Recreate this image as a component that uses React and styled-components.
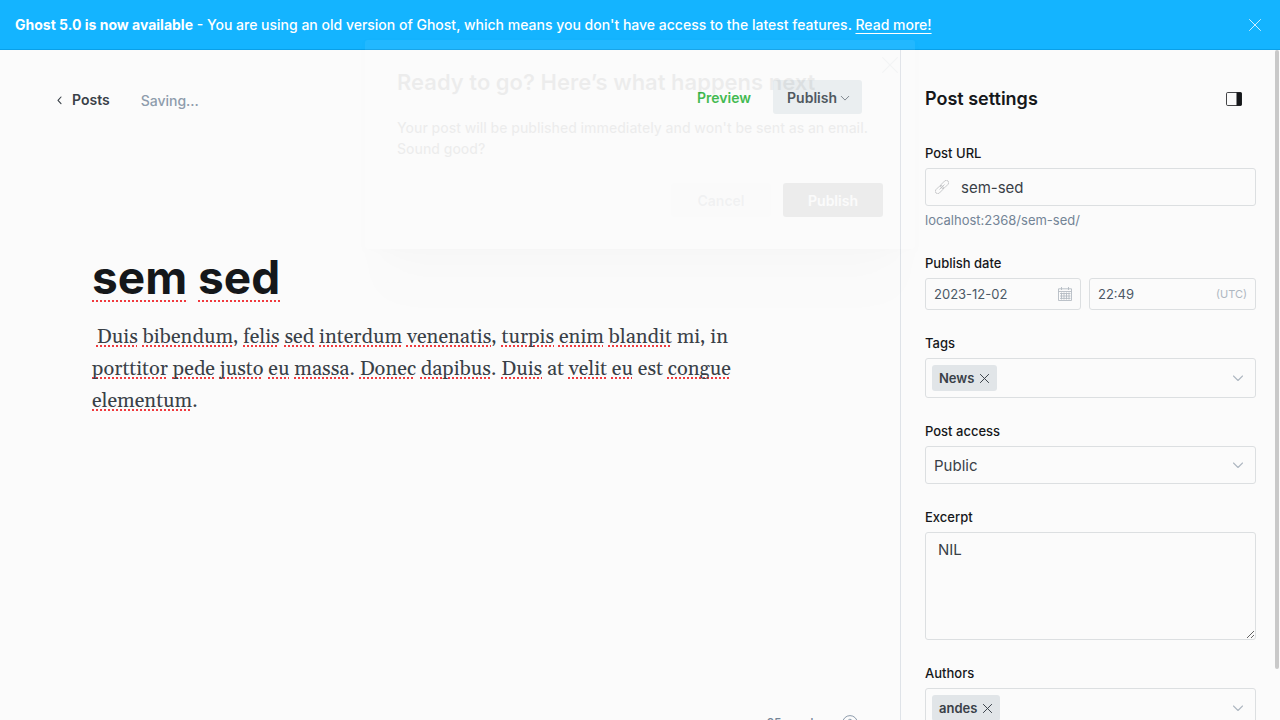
import React from "react";
import styled, { createGlobalStyle, css } from "styled-components";

const ink = "#15171a";
const slate = "#394047";
const muted = "#738496";
const line = "#dcdfe1";
const page = "#fbfbfb";

const GlobalStyle = createGlobalStyle`
  *, *::before, *::after { box-sizing: border-box; }
  html, body, #root { height: 100%; }
  body {
    margin: 0;
    overflow: hidden;
    background: ${page};
    color: ${ink};
    font-family: Inter, "Liberation Sans", sans-serif;
    font-size: 15px;
    -webkit-font-smoothing: antialiased;
  }
  button, input, select, textarea { font: inherit; color: inherit; }
  button { border: 0; background: none; padding: 0; cursor: pointer; }
  h1, h2, p { margin: 0; }
  svg { display: block; }
`;

const Shell = styled.div`
  height: 100%;
  display: flex;
  flex-direction: column;
  position: relative;
`;

const Banner = styled.div`
  flex: none;
  height: 50px;
  display: flex;
  align-items: center;
  justify-content: space-between;
  padding: 0 19px 0 15px;
  background: #14b4ff;
  border-bottom: 1px solid #0aa0e8;
  color: #fff;
  font-size: 14px;
  font-weight: 500;
  line-height: 20px;
`;

const BannerLink = styled.a`
  color: inherit;
  text-decoration: underline 1px;
  text-underline-offset: 3px;
  text-decoration-skip-ink: none;
`;

const Main = styled.div`
  flex: 1;
  min-height: 0;
  display: flex;
`;

const Editor = styled.main`
  flex: 1;
  min-width: 0;
  display: flex;
  flex-direction: column;
  overflow: hidden;
`;

const EditorHeader = styled.header`
  display: flex;
  align-items: center;
  gap: 31px;
  padding: 30px 38px 0 56px;
  font-size: 14px;
  line-height: 20px;
`;

const BackLink = styled.a`
  display: flex;
  align-items: center;
  gap: 8px;
  padding-top: 6px;
  color: ${slate};
  font-weight: 600;
  text-decoration: none;
`;

const Status = styled.span`
  flex: 1;
  padding-top: 8px;
  color: #8e9cac;
  font-weight: 500;
`;

const Actions = styled.div`
  display: flex;
  align-items: center;
  gap: 22px;
  font-weight: 600;
`;

const PreviewButton = styled.button`
  padding-top: 2px;
  color: #36b646;
`;

const PublishMenu = styled.button`
  display: flex;
  align-items: center;
  gap: 3px;
  height: 34px;
  padding: 2px 12px 0 14px;
  border-radius: 3px;
  background: #e9edef;
  color: #454d55;
`;

const Article = styled.article`
  flex: 1;
  min-height: 0;
  width: 100%;
  max-width: 740px;
  padding: 131px 0 0 92px;
`;

const PostTitle = styled.h1`
  font-size: 46px;
  font-weight: 700;
  line-height: 64px;
`;

const PostBody = styled.p`
  margin-top: 12px;
  color: ${slate};
  font-family: Georgia, Gelasio, "Liberation Serif", serif;
  font-size: 20px;
  line-height: 32px;
  white-space: pre-wrap;
`;

const Misspelt = styled.span`
  text-decoration: underline dotted #f03a3e 2px;
  text-decoration-skip-ink: none;
  text-underline-offset: ${(p) => (p.$large ? 6 : 2)}px;
`;

const WordCount = styled.footer`
  display: flex;
  justify-content: flex-end;
  align-items: center;
  gap: 22px;
  margin-bottom: -12px;
  padding-right: 42px;
  color: ${muted};
  font-size: 12px;
  font-weight: 500;
  line-height: 18px;
`;

const Sidebar = styled.aside`
  flex: none;
  width: 380px;
  padding: 36px 24px 0;
  border-left: 1px solid #dfe3e8;
  overflow: hidden;
`;

const SidebarHeader = styled.div`
  display: flex;
  align-items: center;
  justify-content: space-between;
  padding-right: 14px;
  margin-bottom: 31px;
`;

const SidebarTitle = styled.h2`
  font-size: 18px;
  font-weight: 600;
  line-height: 26px;
`;

const Field = styled.div`
  margin-bottom: 23px;
`;

const Label = styled.label`
  display: block;
  margin-bottom: 5px;
  font-size: 13px;
  font-weight: 500;
  line-height: 20px;
`;

const frame = css`
  width: 100%;
  border: 1px solid ${line};
  border-radius: 3px;
  background: ${page};
`;

const Control = styled.div`
  ${frame}
  display: flex;
  align-items: center;
  min-width: 0;
  height: ${(p) => p.$height}px;
  padding: 0 ${(p) => p.$right || 8}px 0 ${(p) => p.$left || 8}px;
  gap: ${(p) => p.$gap || 0}px;
  color: ${(p) => (p.$soft ? "#4c5966" : slate)};
  font-size: ${(p) => (p.$soft ? 13 : 15)}px;
  svg { flex: none; }
`;

const TextInput = styled.input`
  flex: 1;
  min-width: 0;
  width: 100%;
  padding: 0;
  border: 0;
  outline: 0;
  background: transparent;
`;

const Select = styled.select`
  flex: 1;
  border: 0;
  outline: 0;
  padding: 0;
  background: transparent;
  appearance: none;
`;

const Excerpt = styled.textarea`
  ${frame}
  display: block;
  height: 108px;
  padding: 7px 12px;
  color: ${slate};
  font-size: 15px;
  line-height: 20px;
  resize: vertical;
  outline: 0;
`;

const Help = styled.p`
  margin-top: 4px;
  color: ${muted};
  font-size: 13px;
  line-height: 20px;
`;

const DateRow = styled.div`
  display: grid;
  grid-template-columns: 156fr 167fr;
  gap: 8px;
`;

const Zone = styled.span`
  color: #aeb7c1;
  font-size: 11px;
`;

const Token = styled.span`
  display: flex;
  align-items: center;
  gap: 6px;
  height: 26px;
  padding: 0 8px 0 7px;
  border-radius: 3px;
  background: #e1e5e8;
  font-size: 13px;
  font-weight: 600;
`;

const ScrollThumb = styled.div`
  position: absolute;
  top: 50px;
  right: 1px;
  bottom: 51px;
  width: 4px;
  border-radius: 2px;
  background: #c9c9c9;
`;

const Dialog = styled.section`
  position: absolute;
  top: 40px;
  left: 50%;
  width: 550px;
  margin-left: -275px;
  padding: 27px 32px 32px;
  border-radius: 3px;
  background: #fff;
  box-shadow: 0 2px 4px rgba(0, 0, 0, 0.08), 0 24px 16px -14px rgba(0, 0, 0, 0.12), 0 60px 30px -30px rgba(0, 0, 0, 0.12);
  opacity: 0.06;
`;

const DialogTitle = styled.h2`
  font-size: 22px;
  font-weight: 600;
  line-height: 30px;
`;

const DialogText = styled.p`
  margin-top: 20px;
  font-size: 14px;
  font-weight: 500;
  line-height: 21px;
`;

const DialogActions = styled.div`
  display: flex;
  justify-content: flex-end;
  gap: 12px;
  margin-top: 24px;
`;

const DialogButton = styled.button`
  width: 100px;
  height: 34px;
  border-radius: 3px;
  font-size: 14px;
  font-weight: 600;
  color: ${(p) => (p.$primary ? "#fff" : "#59636d")};
  background: ${(p) => (p.$primary ? ink : "#f8f9fa")};
`;

const DialogClose = styled.button`
  position: absolute;
  top: 17px;
  right: 17px;
  color: #7c8b9a;
`;

const Cross = ({ size = 12, width = 1 }) => (
  <svg width={size} height={size} viewBox="0 0 12 12" fill="none" stroke="currentColor" strokeWidth={width} strokeLinecap="round">
    <path d="M.5.5l11 11M11.5.5l-11 11" />
  </svg>
);

const Chevron = ({ width = 12, color = "#aeb7c1" }) => (
  <svg width={width} height={width} viewBox="0 0 12 12" fill="none" stroke={color} strokeWidth="1.1" strokeLinecap="round" strokeLinejoin="round">
    <path d="M1.500 4L6 8.500L10.500 4" />
  </svg>
);

const BackArrow = () => (
  <svg width="8" height="10" viewBox="0 0 8 10" fill="none" stroke="currentColor" strokeWidth="1.1" strokeLinecap="round" strokeLinejoin="round">
    <path d="M5 2L2 5.300L5 8.600" />
  </svg>
);

const LinkIcon = () => (
  <svg width="14" height="14" viewBox="0 0 14 14" fill="none" stroke="#bfc1c3" strokeWidth="0.8">
    <g transform="rotate(-45 7 7)">
      <rect x="-1.500" y="4.600" width="9.500" height="4.800" rx="2.400" />
      <rect x="6" y="4.600" width="9.500" height="4.800" rx="2.400" />
      <path d="M3.500 7h7" />
    </g>
  </svg>
);

const CalendarIcon = () => (
  <svg width="14" height="14" viewBox="0 0 14 14" fill="none" stroke="#b4bbc3" strokeWidth="0.9">
    <path d="M.5 1.800h13v11.700H.5zM.5 4.500h13M3.500 0v3M10.500 0v3M3.500 5.500v7M6 5.500v7M8.500 5.500v7M11 5.500v7M2 6.500h10.500M2 9h10.500M2 11.400h10.500" />
  </svg>
);

const PanelIcon = () => (
  <svg width="16" height="14" viewBox="0 0 16 14">
    <rect x=".5" y=".5" width="15" height="13" rx="1.200" fill="none" stroke={ink} strokeWidth=".8" />
    <path d="M10.500 .2h4a1.300 1.300 0 0 1 1.300 1.300v11a1.300 1.300 0 0 1-1.300 1.300h-4z" fill={ink} />
  </svg>
);

const HelpIcon = () => (
  <svg width="16" height="16" viewBox="0 0 16 16" fill="none" stroke="#8e9cac" strokeWidth="1">
    <circle cx="8" cy="8" r="7.400" />
    <path d="M6 6.200a2 2 0 1 1 2.800 1.900c-.6.300-.8.600-.8 1.300M8 11v1" />
  </svg>
);

// Words wrapped in square brackets are flagged by the spell checker.
const bodyText =
  " [Duis] [bibendum], [felis] [sed] [interdum] [venenatis], [turpis] [enim] [blandit] mi, in [porttitor] [pede] [justo] [eu] [massa]. [Donec] [dapibus]. [Duis] at [velit] [eu] est [congue] [elementum].";

const SpellChecked = ({ text, large }) =>
  text.split(/\[(.*?)\]/).map((part, i) =>
    i % 2 ? <Misspelt key={i} $large={large}>{part}</Misspelt> : part
  );

const TokenField = ({ id, label, value }) => (
  <Field>
    <Label htmlFor={id}>{label}</Label>
    <Control $height={40} $left={6} $right={11}>
      <Token>
        {value}
        <button aria-label={`Remove ${value}`}><Cross size={9} width={1.3} /></button>
      </Token>
      <TextInput id={id} />
      <Chevron />
    </Control>
  </Field>
);

export default function App() {
  return (
    <Shell>
      <GlobalStyle />
      <Banner>
        <span>
          <b>Ghost 5.0 is now available</b> - You are using an old version of Ghost, which means you don't have access to the latest features. <BannerLink href="#upgrade">Read more!</BannerLink>
        </span>
        <button aria-label="Dismiss"><Cross size={12} width={0.8} /></button>
      </Banner>
      <Main>
        <Editor>
          <EditorHeader>
            <BackLink href="#posts"><BackArrow />Posts</BackLink>
            <Status>Saving...</Status>
            <Actions>
              <PreviewButton>Preview</PreviewButton>
              <PublishMenu>Publish <Chevron width={10} color="#6b747d" /></PublishMenu>
            </Actions>
          </EditorHeader>
          <Article>
            <PostTitle><SpellChecked large text="[sem] [sed]" /></PostTitle>
            <PostBody><SpellChecked text={bodyText} /></PostBody>
          </Article>
          <WordCount>
            25 words
            <button aria-label="Help"><HelpIcon /></button>
          </WordCount>
        </Editor>
        <Sidebar>
          <SidebarHeader>
            <SidebarTitle>Post settings</SidebarTitle>
            <button aria-label="Toggle settings"><PanelIcon /></button>
          </SidebarHeader>
          <Field>
            <Label htmlFor="url">Post URL</Label>
            <Control $height={38} $left={9} $gap={12}>
              <LinkIcon />
              <TextInput id="url" defaultValue="sem-sed" />
            </Control>
            <Help>localhost:2368/sem-sed/</Help>
          </Field>
          <Field>
            <Label htmlFor="date">Publish date</Label>
            <DateRow>
              <Control $height={32} $soft>
                <TextInput id="date" defaultValue="2023-12-02" />
                <CalendarIcon />
              </Control>
              <Control $height={32} $soft>
                <TextInput aria-label="Publish time" defaultValue="22:49" />
                <Zone>(UTC)</Zone>
              </Control>
            </DateRow>
          </Field>
          <TokenField id="tags" label="Tags" value="News" />
          <Field>
            <Label htmlFor="access">Post access</Label>
            <Control $height={38} $right={11}>
              <Select id="access" defaultValue="Public">
                <option>Public</option>
              </Select>
              <Chevron />
            </Control>
          </Field>
          <Field>
            <Label htmlFor="excerpt">Excerpt</Label>
            <Excerpt id="excerpt" defaultValue="NIL" />
          </Field>
          <TokenField id="authors" label="Authors" value="andes" />
        </Sidebar>
      </Main>
      <ScrollThumb />
      <Dialog role="dialog" aria-labelledby="dialog-title">
        <DialogTitle id="dialog-title">Ready to go? Here’s what happens next</DialogTitle>
        <DialogText>Your post will be published immediately and won't be sent as an email. Sound good?</DialogText>
        <DialogActions>
          <DialogButton>Cancel</DialogButton>
          <DialogButton $primary>Publish</DialogButton>
        </DialogActions>
        <DialogClose aria-label="Close"><Cross size={16} width={0.8} /></DialogClose>
      </Dialog>
    </Shell>
  );
}
